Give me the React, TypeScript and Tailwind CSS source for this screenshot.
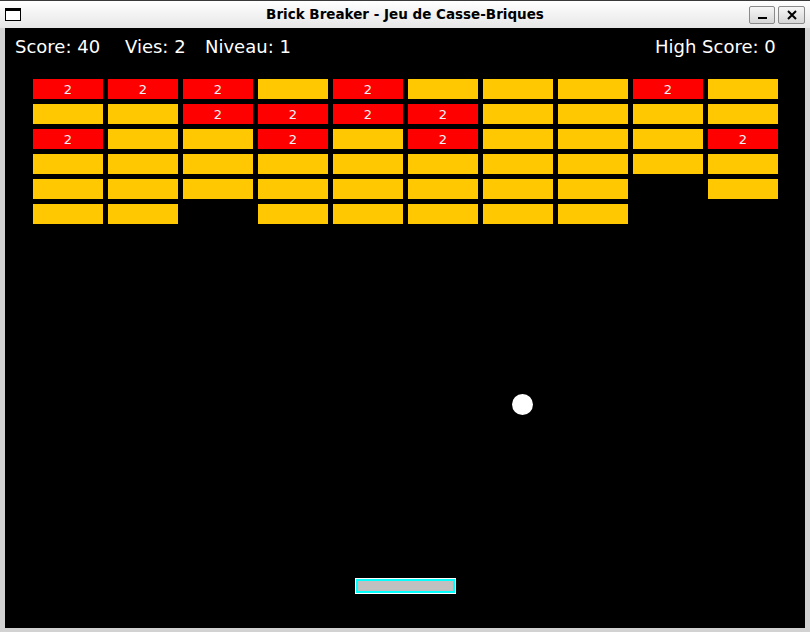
import React from 'react';

type Cell = 'R' | 'Y' | '.';

const layout: string[] = [
  'RRRYRYYYRY',
  'YYRRRRYYYY',
  'RYYRYRYYYR',
  'YYYYYYYYYY',
  'YYYYYYYY.Y',
  'YY.YYYYY..',
];

const Brick: React.FC<{ kind: Cell }> = ({ kind }) => {
  if (kind === '.') return <div />;
  if (kind === 'R') {
    return (
      <div className="bg-[#ff0000] flex items-center justify-center text-[13px] leading-none text-[#f4f4f4]">
        2
      </div>
    );
  }
  return <div className="bg-[#ffc800]" />;
};

const App: React.FC = () => {
  return (
    <div
      className="w-[810px] h-[632px] flex flex-col bg-[#d2d2d2] overflow-hidden"
      style={{ fontFamily: '"DejaVu Sans", Verdana, sans-serif' }}
    >
      {/* Title bar */}
      <div className="h-[28px] flex items-center border-t border-[#3a3a3a] bg-gradient-to-b from-white to-[#e6e6e6]">
        <div className="w-[62px] pl-[5px]">
          <div className="w-[16px] h-[13px] border border-black border-t-[3px] bg-white" />
        </div>
        <div className="flex-1 text-center text-[13.5px] font-bold text-black">
          Brick Breaker - Jeu de Casse-Briques
        </div>
        <div className="w-[62px] flex gap-[3px] pr-[5px] justify-end">
          <div className="w-[26px] h-[18px] border border-[#8a8a8a] rounded-[2px] bg-gradient-to-b from-[#f6f6f6] to-[#d6d6d6] flex items-end justify-center pb-[4px]">
            <div className="w-[9px] h-[2px] bg-black" />
          </div>
          <div className="w-[27px] h-[18px] border border-[#8a8a8a] rounded-[2px] bg-gradient-to-b from-[#f6f6f6] to-[#d6d6d6] flex items-center justify-center">
            <svg width="10" height="10" viewBox="0 0 10 10">
              <path d="M1 1 L9 9 M9 1 L1 9" stroke="black" strokeWidth="2" />
            </svg>
          </div>
        </div>
      </div>

      {/* Game area */}
      <div className="flex-1 px-[5px] pb-[4px]">
        <div className="w-[800px] h-[600px] bg-black relative">
          {/* HUD */}
          <div className="flex items-center h-[38px] pl-[10px] text-[18px] text-white leading-none">
            <span className="w-[110px]">Score: 40</span>
            <span className="w-[80px]">Vies: 2</span>
            <span className="flex-1">Niveau: 1</span>
            <span className="w-[150px]">High Score: 0</span>
          </div>

          {/* Bricks */}
          <div className="ml-[28px] mt-[13px] grid grid-cols-[repeat(10,70px)] auto-rows-[20px] gap-[5px]">
            {layout.flatMap((row, r) =>
              row.split('').map((c, i) => <Brick key={`${r}-${i}`} kind={c as Cell} />)
            )}
          </div>

          {/* Ball */}
          <div className="absolute left-[507px] top-[366px] w-[21px] h-[21px] rounded-full bg-white" />

          {/* Paddle */}
          <div className="absolute left-[350px] top-[550px] w-[101px] h-[16px] border border-white">
            <div className="w-full h-full border-2 border-[#00ffff] bg-[#c0c0c0]" />
          </div>
        </div>
      </div>
    </div>
  );
};

export default App;
